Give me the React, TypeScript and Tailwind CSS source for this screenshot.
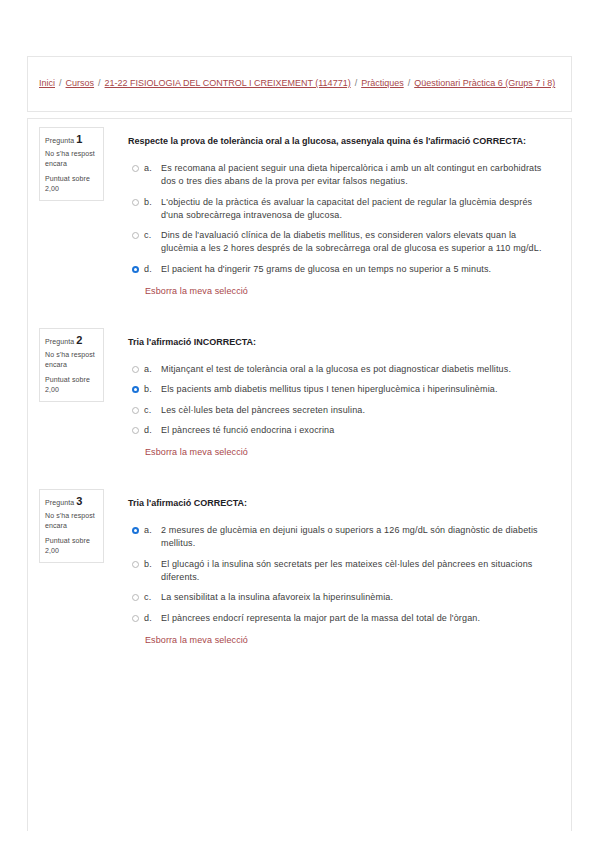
import * as React from 'react';

type Option = { letter: string; text: string; checked?: boolean };
type Question = { num: number; prompt: string; options: Option[] };

const questions: Question[] = [
  {
    num: 1,
    prompt:
      "Respecte la prova de tolerància oral a la glucosa, assenyala quina és l'afirmació CORRECTA:",
    options: [
      {
        letter: 'a.',
        text: 'Es recomana al pacient seguir una dieta hipercalòrica i amb un alt contingut en carbohidrats dos o tres dies abans de la prova per evitar falsos negatius.',
      },
      {
        letter: 'b.',
        text: "L'objectiu de la pràctica és avaluar la capacitat del pacient de regular la glucèmia després d'una sobrecàrrega intravenosa de glucosa.",
      },
      {
        letter: 'c.',
        text: "Dins de l'avaluació clínica de la diabetis mellitus, es consideren valors elevats quan la glucèmia a les 2 hores després de la sobrecàrrega oral de glucosa es superior a 110 mg/dL.",
      },
      {
        letter: 'd.',
        text: "El pacient ha d'ingerir 75 grams de glucosa en un temps no superior a 5 minuts.",
        checked: true,
      },
    ],
  },
  {
    num: 2,
    prompt: "Tria l'afirmació INCORRECTA:",
    options: [
      {
        letter: 'a.',
        text: 'Mitjançant el test de tolerància oral a la glucosa es pot diagnosticar diabetis mellitus.',
      },
      {
        letter: 'b.',
        text: 'Els pacients amb diabetis mellitus tipus I tenen hiperglucèmica i hiperinsulinèmia.',
        checked: true,
      },
      { letter: 'c.', text: 'Les cèl·lules beta del pàncrees secreten insulina.' },
      { letter: 'd.', text: 'El pàncrees té funció endocrina i exocrina' },
    ],
  },
  {
    num: 3,
    prompt: "Tria l'afirmació CORRECTA:",
    options: [
      {
        letter: 'a.',
        text: '2 mesures de glucèmia en dejuni iguals o superiors a 126 mg/dL són diagnòstic de diabetis mellitus.',
        checked: true,
      },
      {
        letter: 'b.',
        text: 'El glucagó i la insulina són secretats per les mateixes cèl·lules del pàncrees en situacions diferents.',
      },
      { letter: 'c.', text: 'La sensibilitat a la insulina afavoreix la hiperinsulinèmia.' },
      { letter: 'd.', text: "El pàncrees endocrí representa la major part de la massa del total de l'òrgan." },
    ],
  },
];

const crumbs = [
  'Inici',
  'Cursos',
  '21-22 FISIOLOGIA DEL CONTROL I CREIXEMENT (114771)',
  'Pràctiques',
  'Qüestionari Pràctica 6 (Grups 7 i 8)',
];

function Radio({ checked }: { checked?: boolean }) {
  if (checked) {
    return (
      <span className="mt-[3px] ml-[4px] w-[7px] h-[7px] rounded-full bg-[#1a73d9] flex items-center justify-center flex-shrink-0">
        <span className="block w-[3px] h-[3px] rounded-full bg-white" />
      </span>
    );
  }
  return (
    <span className="block mt-[3px] ml-[4px] w-[7px] h-[7px] rounded-full border border-[#b8b8b8] bg-white flex-shrink-0" />
  );
}

function QuestionBlock({ q }: { q: Question }) {
  return (
    <div className="flex items-start">
      {/* Info box */}
      <div className="ml-[11px] w-[65px] h-[74px] border border-[#e2e2e2] px-[5px] pt-[5px] text-[7px] tracking-[0.1px] leading-[10px] text-[#4a4a4a] flex-shrink-0">
        <div className="flex items-baseline gap-[2px]">
          <span>Pregunta</span>
          <span className="text-[11px] font-bold text-[#1d2125] leading-[12px]">{q.num}</span>
        </div>
        <div className="mt-[3px]">No s'ha respost</div>
        <div>encara</div>
        <div className="mt-[5px]">Puntuat sobre</div>
        <div>2,00</div>
      </div>

      {/* Content */}
      <div className="ml-[24px] pt-[8px] w-[415px]">
        <div className="text-[9px] leading-[13px] font-bold text-[#1d2125]">{q.prompt}</div>
        <div className="mt-[14px] flex flex-col gap-[7.5px]">
          {q.options.map((o) => (
            <div
              key={o.letter}
              className="flex items-start text-[9px] tracking-[0.15px] leading-[13px] text-[#3d3d3d]"
            >
              <Radio checked={o.checked} />
              <span className="ml-[5px] w-[17px] flex-shrink-0">{o.letter}</span>
              <span className="w-[384px]">{o.text}</span>
            </div>
          ))}
        </div>
        <div className="mt-[9px] ml-[17px] text-[9px] tracking-[0.1px] leading-[13px] text-[#a9474a]">
          Esborra la meva selecció
        </div>
      </div>
    </div>
  );
}

export default function App() {
  return (
    <div
      className="w-[599px] h-[848px] bg-white overflow-hidden"
      style={{ fontFamily: '"Liberation Sans", Arial, sans-serif' }}
    >
      <div className="pt-[56px] px-[27px]">
        {/* Breadcrumb */}
        <div className="h-[56px] border border-[#e6e6e6] flex items-center pl-[11px] text-[9px] text-[#a9474a]">
          {crumbs.map((c, i) => (
            <React.Fragment key={c}>
              {i > 0 && <span className="mx-[4px] text-[#7a7a7a]">/</span>}
              <span className="underline underline-offset-[1px]">{c}</span>
            </React.Fragment>
          ))}
        </div>

        {/* Main */}
        <div className="mt-[6px] h-[713px] border-l border-r border-t border-[#e6e6e6] pt-[8px] flex flex-col gap-[30px]">
          {questions.map((q) => (
            <QuestionBlock key={q.num} q={q} />
          ))}
        </div>
      </div>
    </div>
  );
}
